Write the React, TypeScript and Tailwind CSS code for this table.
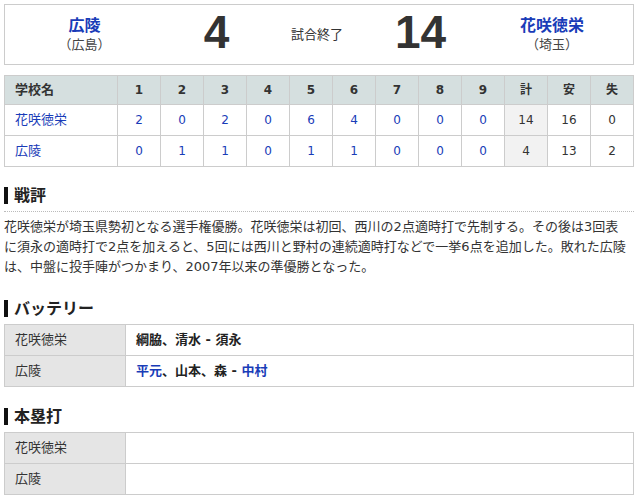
import type { ReactNode } from 'react'

type Line = {
  name: string
  innings: number[]
  runs: number
  hits: number
  errors: number
}

const LINES: Line[] = [
  { name: '花咲徳栄', innings: [2, 0, 2, 0, 6, 4, 0, 0, 0], runs: 14, hits: 16, errors: 0 },
  { name: '広陵', innings: [0, 1, 1, 0, 1, 1, 0, 0, 0], runs: 4, hits: 13, errors: 2 },
]

const HEAD = ['1', '2', '3', '4', '5', '6', '7', '8', '9', '計', '安', '失']

function Heading({ children, dotted = false }: { children: ReactNode; dotted?: boolean }) {
  return (
    <h2
      className={
        dotted
          ? 'flex h-[32px] items-center gap-[6px] border-b border-dotted border-[#bbb] text-[16px] font-bold text-[#222]'
          : 'flex h-[31px] items-center gap-[6px] text-[16px] font-bold text-[#222]'
      }
    >
      <span className="h-[17px] w-[4px] bg-[#111]" />
      {children}
    </h2>
  )
}

function InfoTable({ rows }: { rows: { name: string; value: ReactNode }[] }) {
  return (
    <table className="w-full table-fixed border-collapse text-[13px]">
      <colgroup>
        <col className="w-[121px]" />
        <col />
      </colgroup>
      <tbody>
        {rows.map((r) => (
          <tr key={r.name} className="h-[31px]">
            <td className="border border-[#ccc] bg-[#e5e5e5] pl-[10px] text-[#333]">{r.name}</td>
            <td className="border border-[#ccc] pl-[10px] font-bold text-[#222]">{r.value}</td>
          </tr>
        ))}
      </tbody>
    </table>
  )
}

export default function App() {
  return (
    <div className="min-h-[500px] bg-white pt-1 font-['DejaVu_Sans','Noto_Sans_CJK_JP',sans-serif] text-[#333]">
      <div className="ml-1 w-[630px]">
        {/* score board */}
        <div className="grid h-[61px] grid-cols-[159px_105px_96px_111px_152px] items-center border border-[#ccc]">
          <div className="text-center">
            <div className="text-[16px] font-bold leading-[20px] text-blue-800">広陵</div>
            <div className="text-[13px] leading-[18px] text-[#444]">（広島）</div>
          </div>
          <div className="pb-[6px] text-center font-['Liberation_Sans',Arial,sans-serif] text-[46px] font-bold leading-none text-[#333]">
            4
          </div>
          <div className="text-center text-[13px] text-[#333]">試合終了</div>
          <div className="pb-[6px] text-center font-['Liberation_Sans',Arial,sans-serif] text-[46px] font-bold leading-none text-[#333]">
            14
          </div>
          <div className="text-center">
            <div className="text-[16px] font-bold leading-[20px] text-blue-800">花咲徳栄</div>
            <div className="text-[13px] leading-[18px] text-[#444]">（埼玉）</div>
          </div>
        </div>

        {/* line score */}
        <table className="mt-[10px] w-full table-fixed border-collapse text-[13px]">
          <colgroup>
            <col className="w-[113px]" />
            {HEAD.map((h) => (
              <col key={h} />
            ))}
          </colgroup>
          <thead>
            <tr className="h-[29px] bg-[#d5dfdf]">
              <th className="border border-[#ccc] pl-[10px] text-left font-bold">学校名</th>
              {HEAD.map((h) => (
                <th key={h} className="border border-[#ccc] text-center text-[12px] font-bold">
                  {h}
                </th>
              ))}
            </tr>
          </thead>
          <tbody>
            {LINES.map((l) => (
              <tr key={l.name} className="h-[31px]">
                <td className="border border-[#ccc] pl-[10px] text-blue-800">{l.name}</td>
                {l.innings.map((n, i) => (
                  <td key={i} className="border border-[#ccc] text-center text-[12px] text-blue-800">
                    {n}
                  </td>
                ))}
                <td className="border border-[#ccc] bg-[#f2f2f2] text-center text-[12px]">{l.runs}</td>
                <td className="border border-[#ccc] text-center text-[12px]">{l.hits}</td>
                <td className="border border-[#ccc] text-center text-[12px]">{l.errors}</td>
              </tr>
            ))}
          </tbody>
        </table>

        {/* 戦評 */}
        <div className="mt-[13px]">
          <Heading dotted>戦評</Heading>
          <p className="w-[625px] pt-[5px] text-[13px] leading-[20px] text-[#333]">
            花咲徳栄が埼玉県勢初となる選手権優勝。花咲徳栄は初回、西川の2点適時打で先制する。その後は3回表に須永の適時打で2点を加えると、5回には西川と野村の連続適時打などで一挙6点を追加した。敗れた広陵は、中盤に投手陣がつかまり、2007年以来の準優勝となった。
          </p>
        </div>

        {/* バッテリー */}
        <div className="mt-[16px]">
          <Heading>バッテリー</Heading>
          <InfoTable
            rows={[
              { name: '花咲徳栄', value: '綱脇、清水 - 須永' },
              {
                name: '広陵',
                value: (
                  <>
                    <span className="text-blue-800">平元</span>、山本、森 - <span className="text-blue-800">中村</span>
                  </>
                ),
              },
            ]}
          />
        </div>

        {/* 本塁打 */}
        <div className="mt-[14px]">
          <Heading>本塁打</Heading>
          <InfoTable
            rows={[
              { name: '花咲徳栄', value: '' },
              { name: '広陵', value: '' },
            ]}
          />
        </div>
      </div>
    </div>
  )
}
